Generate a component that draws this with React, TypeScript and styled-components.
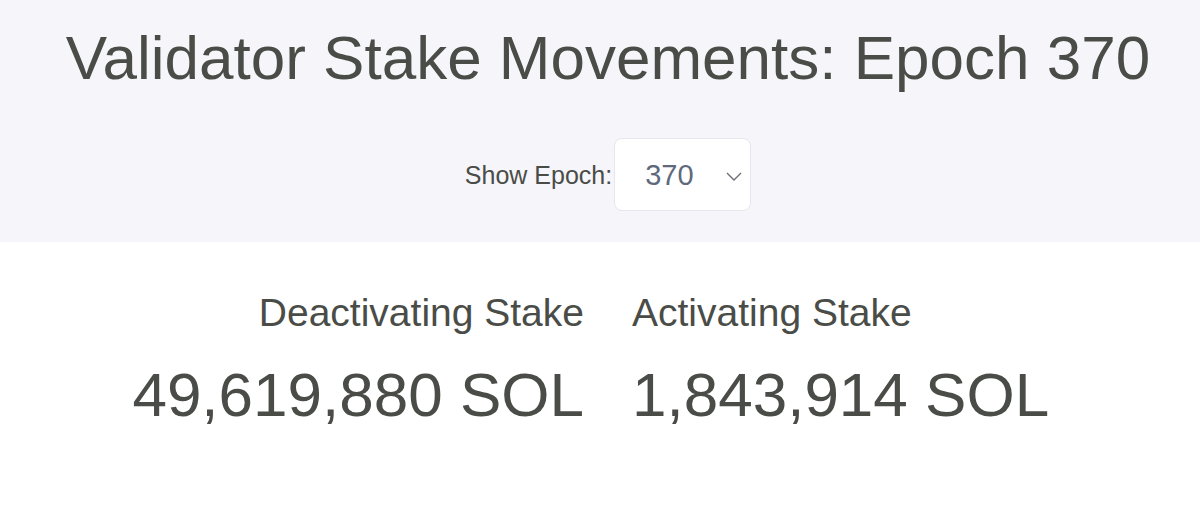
import React, { useState } from 'react'
import styled, { createGlobalStyle } from 'styled-components'

const GlobalStyle = createGlobalStyle`
  html, body {
    margin: 0;
    padding: 0;
    background: #ffffff;
  }
  body {
    font-family: 'Liberation Sans', Arial, Helvetica, sans-serif;
    color: #4a4c47;
  }
`

const epochs = ['370', '369', '368', '367']

export default function App() {
  const [epoch, setEpoch] = useState('370')

  return (
    <>
      <GlobalStyle />
      <Page>
        <Header>
          <Title>Validator Stake Movements: Epoch {epoch}</Title>
          <EpochPicker>
            <PickerLabel>Show Epoch:</PickerLabel>
            <SelectBox>
              <Select value={epoch} onChange={(e) => setEpoch(e.target.value)}>
                {epochs.map((ep) => (
                  <option key={ep} value={ep}>
                    {ep}
                  </option>
                ))}
              </Select>
              <Chevron viewBox="0 0 16 9" aria-hidden="true">
                <path d="M1 1l7 7 7-7" fill="none" stroke="#6b6f78" strokeWidth="1.4" />
              </Chevron>
            </SelectBox>
          </EpochPicker>
        </Header>
        <Stats>
          <StatColumn $align="right">
            <StatLabel>Deactivating Stake</StatLabel>
            <StatValue>49,619,880 SOL</StatValue>
          </StatColumn>
          <StatColumn $align="left">
            <StatLabel>Activating Stake</StatLabel>
            <StatValue>1,843,914 SOL</StatValue>
          </StatColumn>
        </Stats>
      </Page>
    </>
  )
}

const Page = styled.div`
  min-height: 505px;
  display: flex;
  flex-direction: column;
`

const Header = styled.header`
  background: #f6f6fa;
  padding: 22px 0 31px 16px;
  display: flex;
  flex-direction: column;
  align-items: center;
  gap: 44px;
`

const Title = styled.h1`
  margin: 0;
  font-size: 62px;
  line-height: 72px;
  font-weight: 400;
  white-space: nowrap;
`

const EpochPicker = styled.div`
  display: flex;
  align-items: center;
  gap: 2px;
`

const PickerLabel = styled.span`
  font-size: 25px;
  line-height: 30px;
`

const SelectBox = styled.div`
  position: relative;
  width: 137px;
  height: 73px;
  box-sizing: border-box;
  border: 1px solid #e6e6ec;
  border-radius: 8px;
  background: #ffffff;
`

const Select = styled.select`
  appearance: none;
  -webkit-appearance: none;
  width: 100%;
  height: 100%;
  border: none;
  background: transparent;
  padding: 0 0 0 30px;
  font-family: 'Liberation Sans', Arial, sans-serif;
  font-size: 29px;
  color: #5e6a7c;
  outline: none;
  cursor: pointer;
`

const Chevron = styled.svg`
  position: absolute;
  right: 8px;
  top: 33px;
  width: 16px;
  height: 9px;
  pointer-events: none;
`

const Stats = styled.section`
  display: grid;
  grid-template-columns: 1fr 1fr;
  column-gap: 48px;
  padding: 49px 0 0 16px;
`

const StatColumn = styled.div<{ $align: 'left' | 'right' }>`
  display: flex;
  flex-direction: column;
  gap: 24px;
  text-align: ${(p) => p.$align};
`

const StatLabel = styled.div`
  font-size: 39px;
  line-height: 44px;
`

const StatValue = styled.div`
  font-size: 62px;
  line-height: 72px;
`
